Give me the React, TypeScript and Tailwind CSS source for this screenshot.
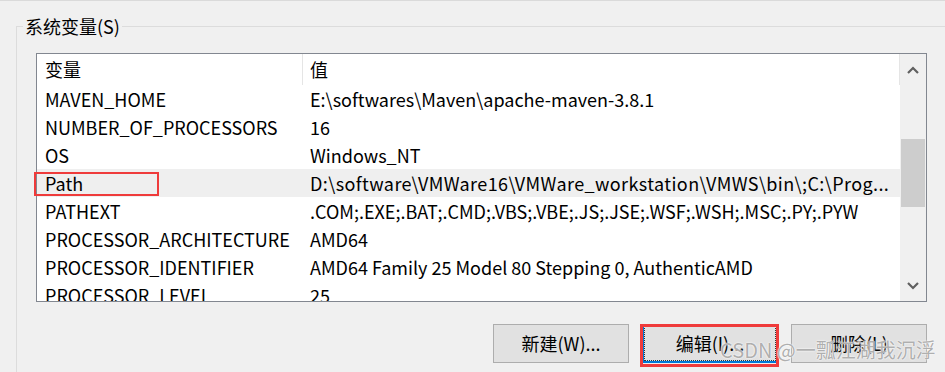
import type { ReactNode } from "react";

type Row = { name: string; value: string; selected?: boolean };

const rows: Row[] = [
  { name: "MAVEN_HOME", value: "E:\\softwares\\Maven\\apache-maven-3.8.1" },
  { name: "NUMBER_OF_PROCESSORS", value: "16" },
  { name: "OS", value: "Windows_NT" },
  {
    name: "Path",
    value: "D:\\software\\VMWare16\\VMWare_workstation\\VMWS\\bin\\;C:\\Prog...",
    selected: true,
  },
  { name: "PATHEXT", value: ".COM;.EXE;.BAT;.CMD;.VBS;.VBE;.JS;.JSE;.WSF;.WSH;.MSC;.PY;.PYW" },
  { name: "PROCESSOR_ARCHITECTURE", value: "AMD64" },
  { name: "PROCESSOR_IDENTIFIER", value: "AMD64 Family 25 Model 80 Stepping 0, AuthenticAMD" },
  { name: "PROCESSOR_LEVEL", value: "25" },
];

function Chevron({ up }: { up?: boolean }) {
  return (
    <svg width="12" height="8" viewBox="0 0 12 8" className="text-[#606060]">
      <path
        d={up ? "M1 7 L6 2 L11 7" : "M1 1 L6 6 L11 1"}
        fill="none"
        stroke="currentColor"
        strokeWidth="2.2"
      />
    </svg>
  );
}

function WinButton({ children, focused }: { children: ReactNode; focused?: boolean }) {
  return (
    <div
      className={
        focused
          ? "flex h-[39px] w-[136px] items-center justify-center border-2 border-[#0078d7] bg-[#e1e1e1]"
          : "flex h-[39px] w-[136px] items-center justify-center border border-[#adadad] bg-[#e1e1e1]"
      }
    >
      {focused ? (
        <div className="flex h-full w-full items-center justify-center border border-dotted border-[#333]">
          {children}
        </div>
      ) : (
        children
      )}
    </div>
  );
}

export default function App() {
  return (
    <div
      className="relative h-[372px] w-[945px] overflow-hidden border-t border-[#dadada] bg-[#f0f0f0] text-[18px] text-black"
      style={{ fontFamily: '"Noto Sans CJK SC", "Noto Sans", sans-serif' }}
    >
      <div className="relative ml-[16px] mt-[25px] flex h-[400px] flex-col border-l border-t border-[#dcdcdc]">
        <span className="absolute left-[6px] top-[-14px] bg-[#f0f0f0] px-[2px] leading-[26px]">系统变量(S)</span>

        <div className="ml-[19px] mt-[26px] flex h-[249px] w-[891px] border border-[#828790] bg-white">
          <div className="flex min-w-0 flex-1 flex-col overflow-hidden">
            <div className="flex h-[31px] shrink-0 items-center">
              <div className="flex h-full w-[266px] items-center border-r border-[#e5e5e5] pl-[8px]">变量</div>
              <div className="flex h-full flex-1 items-center border-r border-[#e5e5e5] pl-[7px]">值</div>
            </div>
            {rows.map((r) => (
              <div
                key={r.name}
                className={
                  r.selected
                    ? "flex h-[28px] shrink-0 items-center whitespace-nowrap bg-[#efefef]"
                    : "flex h-[28px] shrink-0 items-center whitespace-nowrap"
                }
              >
                <div className="w-[266px] shrink-0 pl-[8px]">{r.name}</div>
                <div
                  className={
                    r.selected
                      ? "min-w-0 flex-1 overflow-hidden pl-[7px] tracking-[0.4px]"
                      : "min-w-0 flex-1 overflow-hidden pl-[7px]"
                  }
                >
                  {r.value}
                </div>
              </div>
            ))}
          </div>

          <div className="flex w-[26px] shrink-0 flex-col bg-[#f0f0f0]">
            <div className="flex h-[31px] items-center justify-center">
              <Chevron up />
            </div>
            <div className="h-[54px]" />
            <div className="mx-[1px] h-[68px] bg-[#cdcdcd]" />
            <div className="flex-1" />
            <div className="flex h-[30px] items-center justify-center">
              <Chevron />
            </div>
          </div>
        </div>

        <div className="mt-[22px] flex w-[910px] justify-end gap-[13px]">
          <WinButton>新建(W)...</WinButton>
          <div className="relative">
            <WinButton focused>编辑(I)...</WinButton>
            <div className="absolute left-[-2px] top-[0px] h-[43px] w-[139px] border-[3px] border-[#ef3b3b]" />
          </div>
          <WinButton>删除(L)</WinButton>
        </div>
      </div>

      {/* red annotation around the Path row */}
      <div className="absolute left-[34px] top-[171px] h-[24px] w-[125px] border-2 border-[#ef3b3b]" />

      <div
        className="absolute left-[720px] top-[334px] whitespace-nowrap text-[20px] text-[#9a9a9a]/80"
        style={{ textShadow: "0 0 2px #fff, 0 0 1px #fff" }}
      >
        CSDN @一瓢江湖我沉浮
      </div>
    </div>
  );
}
